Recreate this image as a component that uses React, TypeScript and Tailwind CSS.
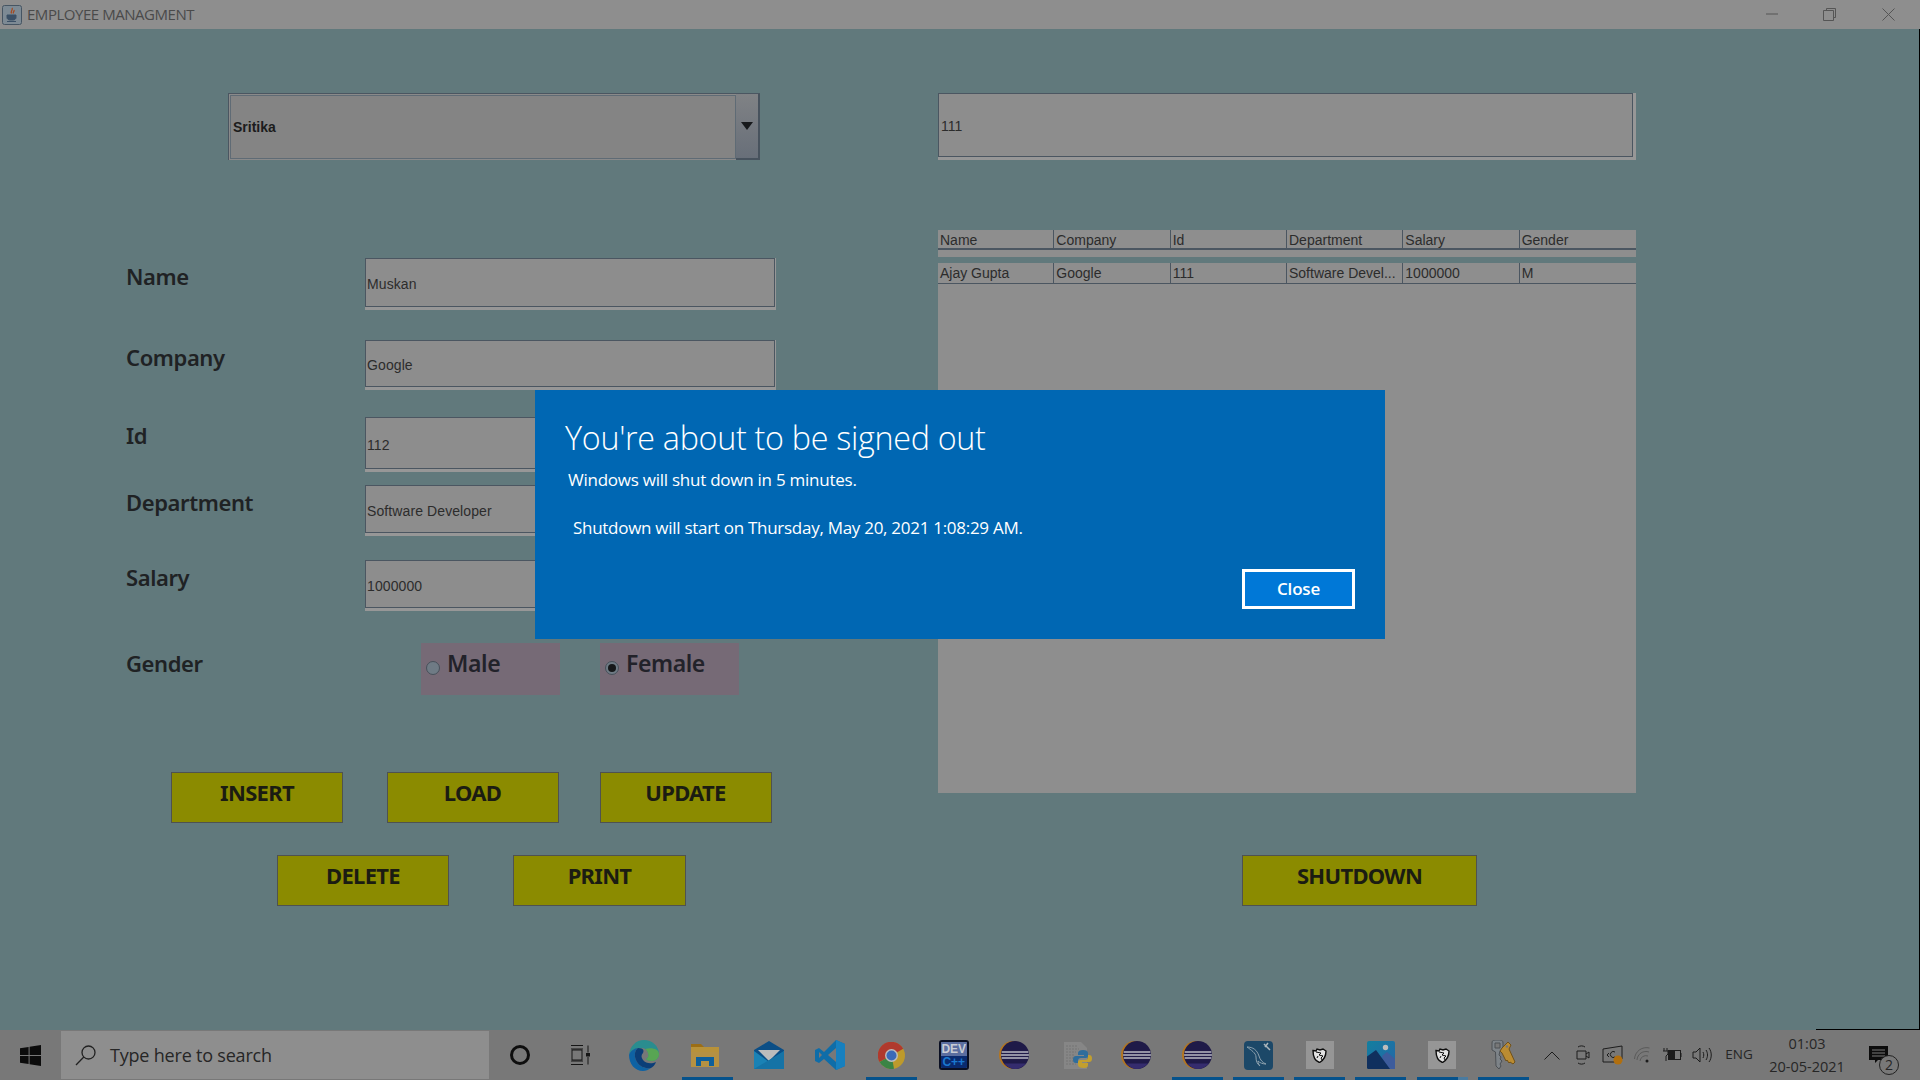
import type { ReactNode } from "react";

const HEADINGS = ["Name", "Company", "Id", "Department", "Salary", "Gender"];
const ROW = ["Ajay Gupta", "Google", "111", "Software Devel...", "1000000", "M"];

function Label({ text, offset }: { text: string; offset: string }) {
    return (
        <div
            className={`w-[239px] shrink-0 h-[30px] leading-[30px] text-[22px] font-semibold text-[#1f2224] font-['Noto_Sans',sans-serif] tracking-[-0.4px] ${offset}`}
        >
            {text}
        </div>
    );
}

function Field({ value, height }: { value: string; height: string }) {
    return (
        <div className={`w-[411px] bg-[#979797] flex ${height}`}>
            <div className="flex-1 mb-[3px] mr-[1px] bg-[#8d8d8d] border border-[#4b5661] flex items-center pl-[1px] pt-[4px] text-[14px] tracking-[0.1px] text-[#2c2c2c] font-['Liberation_Sans',sans-serif]">
                {value}
            </div>
        </div>
    );
}

function FormRow({ label, value, height, gap, offset }: { label: string; value: string; height: string; gap: string; offset: string }) {
    return (
        <div className={`flex items-start pl-[126px] ${gap}`}>
            <Label text={label} offset={offset} />
            <Field value={value} height={height} />
        </div>
    );
}

function OliveButton({ text, width = "w-[172px]", className = "" }: { text: string; width?: string; className?: string }) {
    return (
        <div
            className={`h-[51px] bg-[#8b8b00] border border-[#4f5250] flex justify-center pt-[4px] text-[22px] leading-[30px] font-bold text-[#1b1c12] font-['Noto_Sans',sans-serif] tracking-[-0.7px] ${width} ${className}`}
        >
            {text}
        </div>
    );
}

function Radio({ text, checked, className }: { text: string; checked?: boolean; className: string }) {
    return (
        <div className={`w-[139px] h-[52px] bg-[#766a76] flex items-start pl-[5px] ${className}`}>
            <div className="mt-[18px] w-[14px] h-[14px] rounded-full bg-[#6f7b85] border border-[#47505a] flex items-center justify-center shrink-0">
                {checked && <div className="w-[8px] h-[8px] rounded-full bg-[#16181a]" />}
            </div>
            <div className="ml-[7px] mt-[5px] leading-[30px] text-[23px] font-semibold text-[#22222a] font-['Noto_Sans',sans-serif] tracking-[-0.4px]">
                {text}
            </div>
        </div>
    );
}

function TableRow({ cells, className }: { cells: string[]; className: string }) {
    return (
        <div className={`grid grid-cols-6 ${className}`}>
            {cells.map((c, idx) => (
                <div
                    key={c}
                    className={`pl-[2px] truncate text-[14px] leading-[20px] text-[#2c2c2c] font-['Liberation_Sans',sans-serif] border-[#4b5661] ${idx < 5 ? "border-r" : ""}`}
                >
                    {c}
                </div>
            ))}
        </div>
    );
}

function JavaIcon() {
    return (
        <svg width="20" height="20" viewBox="0 0 20 20" className="ml-[2px] shrink-0">
            <rect x="0.5" y="0.5" width="19" height="19" rx="2" fill="#7d8a94" stroke="#465563" />
            <path d="M10 3c1.500 2-2 3-.5 5.500M12 5c.8 1.500-1.500 2-.5 3.500" fill="none" stroke="#a4491f" strokeWidth="1.300" />
            <path d="M5 10h9v2.500c0 1.500-1.500 2.500-3 2.500H8c-1.500 0-3-1-3-2.500zM5 16.500h9" fill="#3b5066" stroke="#3b5066" />
        </svg>
    );
}

function WindowControls() {
    return (
        <>
            <svg width="12" height="2" viewBox="0 0 12 2" className="absolute left-[1766px] top-[13px]">
                <path d="M0 1h12" stroke="#555" />
            </svg>
            <svg width="13" height="13" viewBox="0 0 13 13" className="absolute left-[1823px] top-[8px]">
                <path d="M3.500 2.500V.5h9v9h-2M.5 2.500h10v10H.5z" fill="none" stroke="#555" />
            </svg>
            <svg width="13" height="13" viewBox="0 0 13 13" className="absolute left-[1882px] top-[8px]">
                <path d="M.5.5l12 12M12.500.5l-12 12" fill="none" stroke="#555" />
            </svg>
        </>
    );
}

function TaskCell({ active, children }: { active?: boolean; children: ReactNode }) {
    return (
        <div className="relative w-[61.2px] h-full flex items-center justify-center shrink-0">
            {children}
            {active && <div className="absolute bottom-0 left-[5px] w-[51px] h-[3px] bg-[#05528c]" />}
        </div>
    );
}

function Eclipse() {
    return (
        <svg width="30" height="28" viewBox="0 0 30 28">
            <circle cx="14" cy="14" r="14" fill="#b5761f" />
            <circle cx="16" cy="14" r="14" fill="#1f1a48" />
            <path d="M2.700 11h26.600M2.100 14h27.800M2.700 17h26.600" stroke="#b9b9c4" strokeWidth="1.600" />
            <path d="M5 22.500c3 3.500 7 5.500 11 5.500s8-2 11-5.500z" fill="#352c6e" />
        </svg>
    );
}

function Shield() {
    return (
        <div className="w-[28px] h-[28px] bg-[#969696] flex items-center justify-center">
            <svg width="15" height="15" viewBox="0 0 15 15">
                <path d="M1 2.500l3 .5 1-2 3 1 3-1 3 2c0 5-2 9-6.500 11.500C3 13 1 8 1 2.500z" fill="#e2e2e2" stroke="#0d0d0d" strokeWidth="1.400" />
                <path d="M4 4l5 1-2 2 4 1-2 2 1 2M6 8l-1 2" fill="none" stroke="#0d0d0d" />
            </svg>
        </div>
    );
}

function AppIcons() {
    return (
        <>
            {/* edge */}
            <TaskCell>
                <svg width="30" height="31" viewBox="0 0 30 31" className="-translate-x-[3px]">
                    <path d="M0 15C1 6 7 0 15 0c8 0 15 6 15 14 0 4-3 7-7 7-3 0-5-1-6-2 2-1 3-3 2-6-1-4-4-5-7-5C6 8 1 11 0 15z" fill="#2a8d8f" />
                    <path d="M30 14c0 4-3 7-7 7-3 0-5-1-6-2 2-1 3-3 2-6-.5-2-1.500-3-3-4 7-2 14 0 14 5z" fill="#58a553" />
                    <path d="M0 15c1-4 6-7 9-7-4 3-4 9-1 14 3 5 9 7 14 6-3 2-5 3-8 3C6 31 0 24 0 15z" fill="#0e62a3" />
                    <path d="M9 8c-4 3-4 9-1 14 3 5 9 7 14 6 2-1 4-3 5-6-4 2-10 2-13-2-2-3-2-5 0-7 1-2 1-5-5-5z" fill="#0b3e78" />
                </svg>
            </TaskCell>
            {/* file explorer */}
            <TaskCell active>
                <svg width="28" height="23" viewBox="0 0 28 23" className="-translate-x-[3px]">
                    <path d="M0 0h10l3 3v2H0z" fill="#9c6e16" />
                    <path d="M0 3h28v8H0z" fill="#b8923a" />
                    <path d="M0 8h28v15H0z" fill="#b59142" />
                    <path d="M5 13h18v9h-5v-5h-8v5H5z" fill="#0d5f9b" />
                </svg>
            </TaskCell>
            {/* mail */}
            <TaskCell>
                <svg width="30" height="28" viewBox="0 0 30 28">
                    <path d="M15 0l15 9v19H0V9z" fill="#0b4e86" />
                    <path d="M4 9h22l-11 11z" fill="#bcbcbc" />
                    <path d="M0 10l15 11 15-11v18H0z" fill="#1a82b5" />
                    <path d="M0 28l30-18v18z" fill="#1573a6" />
                </svg>
            </TaskCell>
            {/* vs code */}
            <TaskCell>
                <svg width="30" height="30" viewBox="0 0 30 30">
                    <path d="M21 0l9 4v22l-9 4-12-11-5 4-4-2V10l4-2 5 4z" fill="#0f6da8" />
                    <path d="M4 12l3 3-3 3z" fill="#787878" />
                    <path d="M21 0l9 4v22l-9 4z" fill="#1780bf" />
                    <path d="M21 8v14l-8-7z" fill="#787878" />
                </svg>
            </TaskCell>
            {/* chrome */}
            <TaskCell active>
                <svg width="27" height="27" viewBox="0 0 27 27">
                    <circle cx="13.500" cy="13.500" r="13.500" fill="#bd9a2c" />
                    <path d="M13.500 13.500L25.200 6.750A13.500 13.500 0 0 0 1.500 20z" fill="#b0392d" />
                    <path d="M13.500 13.500L1.500 20A13.500 13.500 0 0 0 16 26.800z" fill="#3b8445" />
                    <circle cx="13.500" cy="13.500" r="6.500" fill="#bdbdbd" />
                    <circle cx="13.500" cy="13.500" r="5" fill="#3b6ab8" />
                </svg>
            </TaskCell>
            {/* dev c++ */}
            <TaskCell>
                <div className="w-[30px] h-[30px] rounded-[3px] border-2 border-[#0a0f22] flex flex-col items-center font-['Liberation_Sans',sans-serif] font-bold leading-none overflow-hidden translate-x-[1px]">
                    <div className="w-full h-[14px] bg-[#5b6ea0] text-[#c9ccd4] text-[12px] flex items-center justify-center">DEV</div>
                    <div className="w-full flex-1 bg-[#0a2a6e] text-[#1a78d0] text-[12px] flex items-center justify-center">C++</div>
                </div>
            </TaskCell>
            <TaskCell>
                <Eclipse />
            </TaskCell>
            {/* python file */}
            <TaskCell>
                <svg width="28" height="27" viewBox="0 0 28 27" className="translate-x-[3px]">
                    <path d="M0 0h17l6 6v21H0z" fill="#868686" />
                    <path d="M2 4h11M2 7h13M2 10h10M2 13h8M2 16h10M2 19h8M2 22h10" stroke="#747474" strokeWidth="1.200" strokeDasharray="2 1" />
                    <path d="M19 8c-3 0-5 1-5 3v2h6v1h-8c-2 0-3 1-3 3.500S10 21 12 21h2v-2c0-2 1-3 3-3h5c1 0 2-1 2-2v-3c0-2-2-3-5-3z" fill="#2f6d9c" />
                    <path d="M20 26c3 0 4-1 4-3v-2h-6v-1h7c2 0 3-1 3-3.500S27 13 25 13h-1v2c0 2-1 3-3 3h-5c-1 0-2 1-2 2v3c0 2 2 3 6 3z" fill="#c29f2f" />
                </svg>
            </TaskCell>
            <TaskCell>
                <Eclipse />
            </TaskCell>
            <TaskCell active>
                <Eclipse />
            </TaskCell>
            {/* mysql workbench */}
            <TaskCell active>
                <svg width="29" height="29" viewBox="0 0 29 29">
                    <rect width="29" height="29" rx="4" fill="#1c4868" />
                    <path d="M3 6c6 0 10 3 12 9 1 4 4 7 7 8-3 0-6-1-8-3 0 2 1 4 2 5-3-2-4-5-4-9 0-4-5-7-9-10z" fill="none" stroke="#8da1ae" strokeWidth="1" />
                    <path d="M20 3l6 6M24 2l-3 4" stroke="#aab5bc" strokeWidth="1.500" />
                </svg>
            </TaskCell>
            <TaskCell active>
                <Shield />
            </TaskCell>
            {/* photos */}
            <TaskCell active>
                <svg width="28" height="28" viewBox="0 0 28 28">
                    <defs>
                        <linearGradient id="sky" x1="0" y1="0" x2="1" y2="1">
                            <stop offset="0" stopColor="#127f9f" />
                            <stop offset="1" stopColor="#2666a8" />
                        </linearGradient>
                    </defs>
                    <rect width="28" height="28" rx="2" fill="url(#sky)" />
                    <circle cx="18.500" cy="6.500" r="2.700" fill="#bcbcbc" />
                    <path d="M15 15l5-4 8 7v10H18z" fill="#3d5c9c" />
                    <path d="M0 27V15.500L9 9l14 19H2a2 2 0 0 1-2-1z" fill="#10305e" />
                </svg>
            </TaskCell>
            <TaskCell active>
                <Shield />
                <div className="absolute bottom-0 left-[46px] w-[10px] h-[3px] bg-[#4a7ba0] z-10" />
            </TaskCell>
            {/* keys */}
            <TaskCell active>
                <svg width="26" height="30" viewBox="0 0 26 30">
                    <path d="M2 3c0-2 1-3 3-3h5c2 0 3 1 3 3v5l-3 3-1 4 2 2-1 2 2 2-2 3 1 2-2 3-3-3-.5-14L2 10z" fill="#7d8388" stroke="#4c5054" />
                    <path d="M5 3h5v5H5z" fill="#787878" stroke="#4c5054" />
                    <path d="M12 8l6-6 3 3-2 4 6 13-2 2-3-2-1 1-2-3-1 1-4-8-2-2z" fill="#bb8c32" stroke="#70511a" />
                    <circle cx="17" cy="6.500" r="1.300" fill="#787878" />
                </svg>
            </TaskCell>
        </>
    );
}

function SystemTray() {
    return (
        <div className="ml-auto h-full flex items-center text-[#262626] font-['Open_Sans',sans-serif]">
            <div className="w-[30px] flex justify-center">
                <svg width="16" height="9" viewBox="0 0 16 9">
                    <path d="M.5 8.500L8 1l7.500 7.500" fill="none" stroke="#1c1c1c" />
                </svg>
            </div>
            <div className="w-[31px] flex justify-center">
                <svg width="14" height="20" viewBox="0 0 14 20">
                    <path d="M2 2c2-1.500 5-1.500 7 0M2 18c2 1.500 5 1.500 7 0M1 6h9v8H1zM10 9l3-2v6l-3-2" fill="none" stroke="#1c1c1c" />
                </svg>
            </div>
            <div className="w-[29px] flex justify-center">
                <svg width="21" height="20" viewBox="0 0 21 20">
                    <path d="M1 4l19-3v13l-8 3H1zM13 7a3 3 0 1 0 0 5M7 8l-2 2 2 2" fill="none" stroke="#1c1c1c" />
                    <circle cx="16" cy="15" r="4.500" fill="#b16f0f" />
                </svg>
            </div>
            <div className="w-[30px] flex justify-center">
                <svg width="16" height="16" viewBox="0 0 16 16">
                    <path d="M.5 12a12 12 0 0 1 15-11M3 13a9 9 0 0 1 12-8M6 14a6 6 0 0 1 8-5" fill="none" stroke="#5a5a5a" />
                    <circle cx="13" cy="14" r="1.500" fill="#1c1c1c" />
                </svg>
            </div>
            <div className="w-[30px] flex justify-center">
                <svg width="19" height="14" viewBox="0 0 19 14">
                    <path d="M1 0v3M4 0v3M0 3h5v3l-2 2v5" fill="none" stroke="#1c1c1c" />
                    <rect x="5.500" y="2.500" width="12" height="9" fill="none" stroke="#1c1c1c" />
                    <rect x="6" y="3" width="6" height="8" fill="#1c1c1c" />
                    <path d="M18 5v4" stroke="#1c1c1c" />
                </svg>
            </div>
            <div className="w-[30px] flex justify-center">
                <svg width="20" height="16" viewBox="0 0 20 16">
                    <path d="M1 5h3l4-4v14l-4-4H1zM11 5c1 2 1 4 0 6M14 3c2 3 2 7 0 10M17 1c3 4 3 10 0 14" fill="none" stroke="#1c1c1c" />
                </svg>
            </div>
            <div className="w-[44px] text-center text-[13.500px] leading-none">ENG</div>
            <div className="w-[92px] flex flex-col items-center text-[14.500px] leading-[23px]">
                <div>01:03</div>
                <div>20-05-2021</div>
            </div>
            <div className="relative w-[67px] h-full">
                <svg width="19" height="17" viewBox="0 0 19 17" className="absolute left-[16px] top-[16px]">
                    <path d="M0 0h19v14H9l-3 3v-3H0z" fill="#0c0c0c" />
                    <path d="M3 4h13M3 7h13M3 10h13" stroke="#787878" />
                </svg>
                <div className="absolute left-[26px] top-[25px] w-[20px] h-[20px] rounded-full border border-[#222] bg-[#787878] flex items-center justify-center text-[14px] leading-none">
                    2
                </div>
            </div>
        </div>
    );
}

function Taskbar() {
    return (
        <div className="h-[50px] bg-[#787878] flex items-stretch shrink-0">
            <div className="w-[61px] flex items-center justify-center">
                <svg width="21" height="21" viewBox="0 0 21 21">
                    <path d="M0 3.200l8.600-1.200v8H0zM9.600 1.800L21 0v10H9.600zM0 11h8.600v8L0 17.800zM9.600 11H21v10L9.600 19.200z" fill="#0c0c0c" />
                </svg>
            </div>
            <div className="w-[428px] my-[1px] bg-[#8e8e8e] flex items-center">
                <svg width="22" height="22" viewBox="0 0 22 22" className="ml-[14px]">
                    <circle cx="13.500" cy="8.500" r="6.500" fill="none" stroke="#222" strokeWidth="1.300" />
                    <path d="M8.800 13L1 21" stroke="#222" strokeWidth="1.300" />
                </svg>
                <span className="ml-[13px] text-[18px] text-[#262626] font-['Open_Sans',sans-serif] tracking-[-0.2px]">Type here to search</span>
            </div>
            <div className="w-[61px] flex items-center justify-center">
                <div className="w-[20px] h-[20px] rounded-full border-[3px] border-[#0e0e0e]" />
            </div>
            <div className="w-[59px] flex items-center justify-center">
                <svg width="20" height="20" viewBox="0 0 20 20">
                    <path d="M1 .5h12M1 4h12M2 5v10h10V5zM1 16h12M1 19.500h12M18 .5v7M18 12v7.500" fill="none" stroke="#161616" />
                    <rect x="16" y="8" width="4" height="3.500" fill="#161616" />
                </svg>
            </div>
            <div className="w-[7.2px]" />
            <AppIcons />
            <SystemTray />
        </div>
    );
}

function SignOutDialog() {
    return (
        <div className="absolute left-[535px] top-[390px] w-[850px] h-[249px] bg-[#0067b3] text-white font-['Open_Sans',sans-serif]">
            <div className="ml-[30px] mt-[27px] h-[40px] leading-[40px] text-[32.300px] font-light tracking-[-0.3px]">You're about to be signed out</div>
            <div className="ml-[33px] mt-[11px] leading-[24px] text-[17px] tracking-[-0.25px]">Windows will shut down in 5 minutes.</div>
            <div className="ml-[38px] mt-[24px] leading-[24px] text-[17px] tracking-[-0.28px]">Shutdown will start on Thursday, May 20, 2021 1:08:29 AM.</div>
            <div className="absolute left-[707px] top-[179px] w-[113px] h-[40px] border-[3px] border-white bg-[#0078d7] flex items-center justify-center text-[17px] font-semibold tracking-[-0.2px]">
                Close
            </div>
        </div>
    );
}

export default function App() {
    return (
        <div className="relative w-[1920px] h-[1080px] overflow-hidden flex flex-col bg-[#61797c]">
            <div className="relative h-[29px] bg-[#8e8e8e] flex items-center shrink-0">
                <JavaIcon />
                <span className="ml-[5px] text-[15px] text-[#4a4a4a] font-['Open_Sans',sans-serif] tracking-[-0.46px]">EMPLOYEE MANAGMENT</span>
                <WindowControls />
            </div>

            <div className="flex-1 flex border-r border-black">
                {/* left column, form */}
                <div className="w-[938px] shrink-0 pt-[64px]">
                    <div className="ml-[228px] w-[532px] h-[67px] flex border-t border-l border-[#4b5661] bg-[#8a8a8a]">
                        <div className="flex-1 mb-[1px] mt-[1px] ml-[1px] bg-[#848484] border border-[#5f6b75] flex items-center pl-[2px] pt-[1px] text-[14px] font-bold text-[#1c1c1c] font-['Liberation_Sans',sans-serif]">
                            Sritika
                        </div>
                        <div className="w-[24px] bg-gradient-to-b from-[#808285] to-[#686f79] border-r-2 border-b-2 border-[#47525d] flex items-center justify-center">
                            <svg width="12" height="8" viewBox="0 0 12 8">
                                <path d="M0 0h12L6 8z" fill="#17191c" />
                            </svg>
                        </div>
                    </div>

                    <FormRow label="Name" value="Muskan" height="h-[52px]" gap="mt-[98px]" offset="mt-[3px]" />
                    <FormRow label="Company" value="Google" height="h-[50px]" gap="mt-[30px]" offset="mt-[2px]" />
                    <FormRow label="Id" value="112" height="h-[55px]" gap="mt-[27px]" offset="mt-[3px]" />
                    <FormRow label="Department" value="Software Developer" height="h-[51px]" gap="mt-[13px]" offset="mt-[2px]" />
                    <FormRow label="Salary" value="1000000" height="h-[51px]" gap="mt-[24px]" offset="mt-[2px]" />

                    <div className="flex items-start pl-[126px] mt-[32px]">
                        <Label text="Gender" offset="mt-[5px] !w-[295px]" />
                        <Radio text="Male" className="" />
                        <Radio text="Female" checked className="ml-[40px]" />
                    </div>

                    <div className="flex pl-[171px] mt-[77px] gap-[44px]">
                        <OliveButton text="INSERT" />
                        <OliveButton text="LOAD" className="-ml-[0.5px]" />
                        <OliveButton text="UPDATE" className="-ml-[3px]" />
                    </div>
                    <div className="flex pl-[277px] mt-[32px] gap-[64px]">
                        <OliveButton text="DELETE" />
                        <OliveButton text="PRINT" width="w-[173px]" />
                    </div>
                </div>

                {/* right column, search and table */}
                <div className="w-[698px] shrink-0 pt-[64px]">
                    <div className="h-[67px] bg-[#979797] flex">
                        <div className="flex-1 mb-[3px] mr-[3px] bg-[#8d8d8d] border border-[#4b5661] flex items-center pl-[2px] pt-[2px] text-[14px] text-[#2c2c2c] font-['Liberation_Sans',sans-serif]">
                            111
                        </div>
                    </div>

                    <div className="mt-[70px] h-[27px] bg-[#8e8e8e]">
                        <TableRow cells={HEADINGS} className="h-[18px] border-b-2 border-[#4b5661] box-content" />
                    </div>

                    <div className="mt-[6px] h-[530px] bg-[#8e8e8e]">
                        <TableRow cells={ROW} className="h-[20px] border-b border-[#4b5661] box-content" />
                    </div>

                    <OliveButton text="SHUTDOWN" width="w-[235px]" className="ml-[304px] mt-[62px]" />
                </div>
            </div>

            <div className="absolute left-[1816px] top-[1029px] w-[104px] h-[1px] bg-black" />
            <Taskbar />
            <SignOutDialog />
        </div>
    );
}
